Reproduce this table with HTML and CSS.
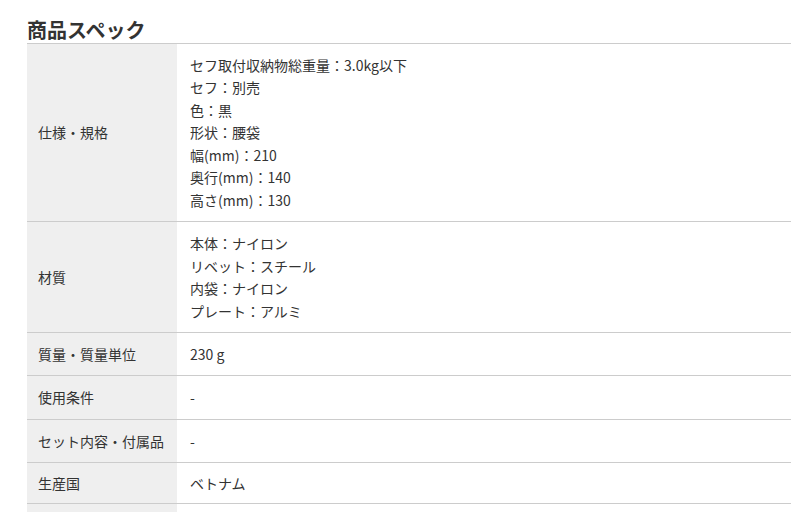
FILE: index.html
```html
<!DOCTYPE html>
<html lang="ja">
<head>
    <meta charset="UTF-8">
    <meta name="viewport" content="width=device-width, initial-scale=1.0">
    <title>商品スペック</title>
    <link rel="stylesheet" href="styles.css">
</head>
<body>
    <section class="spec">
        <h2 class="spec-title">商品スペック</h2>
        <table class="spec-table">
            <tr>
                <th>仕様・規格</th>
                <td>
                    セフ取付収納物総重量：3.0kg以下<br>
                    セフ：別売<br>
                    色：黒<br>
                    形状：腰袋<br>
                    幅(mm)：210<br>
                    奥行(mm)：140<br>
                    高さ(mm)：130
                </td>
            </tr>
            <tr>
                <th>材質</th>
                <td>
                    本体：ナイロン<br>
                    リベット：スチール<br>
                    内袋：ナイロン<br>
                    プレート：アルミ
                </td>
            </tr>
            <tr>
                <th>質量・質量単位</th>
                <td>230 g</td>
            </tr>
            <tr>
                <th>使用条件</th>
                <td>-</td>
            </tr>
            <tr>
                <th>セット内容・付属品</th>
                <td>-</td>
            </tr>
            <tr class="short">
                <th>生産国</th>
                <td>ベトナム</td>
            </tr>
            <tr>
                <th>&nbsp;</th>
                <td>&nbsp;</td>
            </tr>
        </table>
    </section>
</body>
</html>
```

FILE: styles.css
```css
body {
    margin: 0;
    background-color: #fff;
    color: #333;
    font-family: "Noto Sans CJK JP", "Noto Sans", sans-serif;
}
.spec {
    margin-left: 27px;
}
.spec-title {
    margin: 0;
    padding-top: 16px;
    font-size: 20px;
    line-height: 27px;
    font-weight: bold;
    color: #333;
    border-bottom: 1px solid #ccc;
}
.spec-table {
    width: 100%;
    border-collapse: collapse;
    font-size: 14px;
    line-height: 22.45px;
}
.spec-table tr {
    border-bottom: 1px solid #ccc;
}
.spec-table th {
    width: 150px;
    padding: 10px 11px;
    box-sizing: border-box;
    background-color: #efefef;
    font-weight: normal;
    text-align: left;
    vertical-align: middle;
}
.spec-table td {
    padding: 10px 13px;
    vertical-align: middle;
}
.spec-table .short th,
.spec-table .short td {
    padding-top: 8.5px;
    padding-bottom: 8.5px;
}
```
